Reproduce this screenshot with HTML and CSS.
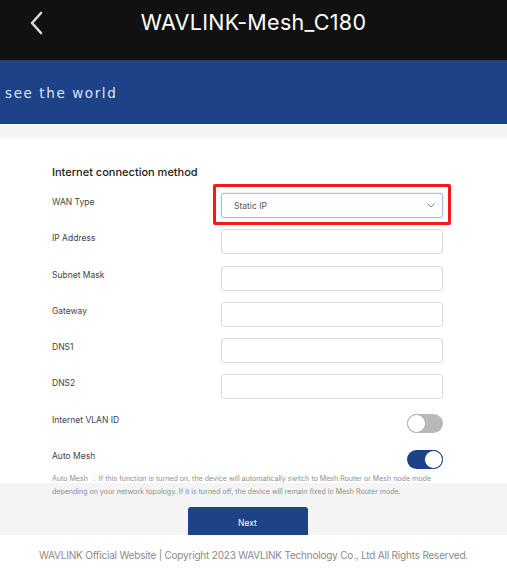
FILE: index.html
```html
<!DOCTYPE html>
<html>
<head>
<meta charset="utf-8">
<link rel="stylesheet" href="styles.css">
</head>
<body>
<header class="topbar">
  <svg class="back" width="16" height="24" viewBox="0 0 16 24"><path d="M12 2 L3 12 L12 22" fill="none" stroke="#d8d8d8" stroke-width="2.6" stroke-linecap="round" stroke-linejoin="round"/></svg>
  <div class="title">WAVLINK-Mesh_C180</div>
</header>
<div class="banner"><span class="slogan">see the world</span></div>
<main class="main">
  <section class="card">
    <h2 class="heading">Internet connection method</h2>
    <div class="form">
      <div class="label">WAN Type</div>
      <div class="control highlight">
        <div class="select"><span>Static IP</span>
          <svg class="chev" width="8" height="5" viewBox="0 0 8 5"><path d="M0.5 0.5 L4 4 L7.5 0.5" fill="none" stroke="#777" stroke-width="0.9"/></svg>
        </div>
      </div>
      <div class="label">IP Address</div>
      <div class="control"><div class="input"></div></div>
      <div class="label">Subnet Mask</div>
      <div class="control"><div class="input"></div></div>
      <div class="label">Gateway</div>
      <div class="control"><div class="input"></div></div>
      <div class="label">DNS1</div>
      <div class="control"><div class="input"></div></div>
      <div class="label">DNS2</div>
      <div class="control"><div class="input"></div></div>
      <div class="label">Internet VLAN ID</div>
      <div class="control toggle-cell"><div class="toggle off"><span class="knob"></span></div></div>
      <div class="label">Auto Mesh</div>
      <div class="control toggle-cell"><div class="toggle on"><span class="knob"></span></div></div>
    </div>
    <p class="desc">Auto Mesh ： If this function is turned on, the device will automatically switch to Mesh Router or Mesh node mode<br>depending on your network topology. If it is turned off, the device will remain fixed in Mesh Router mode.</p>
  </section>
  <div class="actions"><button class="next">Next</button></div>
</main>
<footer class="footer">WAVLINK Official Website | Copyright 2023 WAVLINK Technology Co., Ltd All Rights Reserved.</footer>
</body>
</html>
```
FILE: styles.css
```css
*, *::before, *::after { box-sizing: border-box; }
html, body { margin: 0; padding: 0; }
body {
  width: 507px;
  height: 579px;
  overflow: hidden;
  background: #fff;
  font-family: Inter, "Liberation Sans", Arial, sans-serif;
  color: #333;
}
.topbar {
  height: 60px;
  background: #111;
  display: flex;
  align-items: flex-start;
  justify-content: center;
  padding-top: 9px;
  position: relative;
}
.back {
  position: absolute;
  left: 29px;
  top: 11px;
}
.title {
  color: #fff;
  font-family: Inter, "Liberation Sans", sans-serif;
  font-size: 21.5px;
  font-weight: 400;
  line-height: 27px;
  letter-spacing: 0.3px;
}
.banner {
  height: 64px;
  background: #1e4288;
  display: flex;
  align-items: center;
  padding-left: 5px;
  border-top: 1px solid #2a3a5a;
}
.slogan {
  color: #dfe6f3;
  font-family: "DejaVu Sans", sans-serif;
  font-size: 13.5px;
  letter-spacing: 1.6px;
}
.main {
  background: #f4f4f4;
  padding-top: 14px;
  height: 411px;
}
.card {
  background: #fff;
  height: 345px;
  padding: 27px 64px 0 52px;
}
.heading {
  margin: 0 0 14px 0;
  font-size: 11px;
  font-weight: 500;
  line-height: 14px;
  color: #222;
}
.form {
  display: grid;
  grid-template-columns: 169px 222px;
  grid-auto-rows: 25px;
  row-gap: 11.3px;
}
.label {
  font-size: 8.5px;
  line-height: 12px;
  padding-top: 3px;
  color: #444;
}
.control { position: relative; }
.input {
  height: 25px;
  border: 1px solid #dcdcdc;
  border-radius: 3px;
  background: #fff;
}
.select {
  height: 25px;
  border: 1px solid #9fc3e6;
  border-radius: 3px;
  background: #fff;
  box-shadow: 0 0 2px rgba(120,170,230,0.5);
  display: flex;
  align-items: center;
  justify-content: space-between;
  padding: 0 7px 0 12px;
  font-size: 8.5px;
  color: #555;
}
.highlight::after {
  content: "";
  position: absolute;
  left: -8px;
  top: -9px;
  width: 238px;
  height: 41px;
  border: 3px solid #f5191c;
  border-radius: 2px;
}
.toggle-cell { display: flex; align-items: center; justify-content: flex-end; }
.toggle {
  width: 36px;
  height: 19px;
  border-radius: 10px;
  position: relative;
}
.toggle.off { background: #b9b9b9; }
.toggle.on { background: #1e4288; }
.knob {
  position: absolute;
  top: 0;
  width: 19px;
  height: 19px;
  border-radius: 50%;
  background: #fff;
}
.toggle.off .knob { left: 0; border: 1px solid #b0b0b0; }
.toggle.on .knob { right: 0; border: 1px solid #1e4288; }
.desc {
  margin: 0;
  font-size: 7.05px;
  line-height: 13px;
  color: #8f8f8f;
  white-space: nowrap;
}
.actions {
  display: flex;
  justify-content: center;
  padding-top: 24px;
  padding-right: 12px;
}
.next {
  width: 120px;
  height: 28px;
  background: #1e4288;
  color: #fff;
  border: none;
  border-radius: 3px 3px 0 0;
  font-family: Inter, "Liberation Sans", sans-serif;
  font-size: 8.5px;
  padding: 3px 0 0 0;
}
.footer {
  text-align: center;
  font-size: 10px;
  letter-spacing: -0.2px;
  color: #8a8a8a;
  padding-top: 14px;
}
```
